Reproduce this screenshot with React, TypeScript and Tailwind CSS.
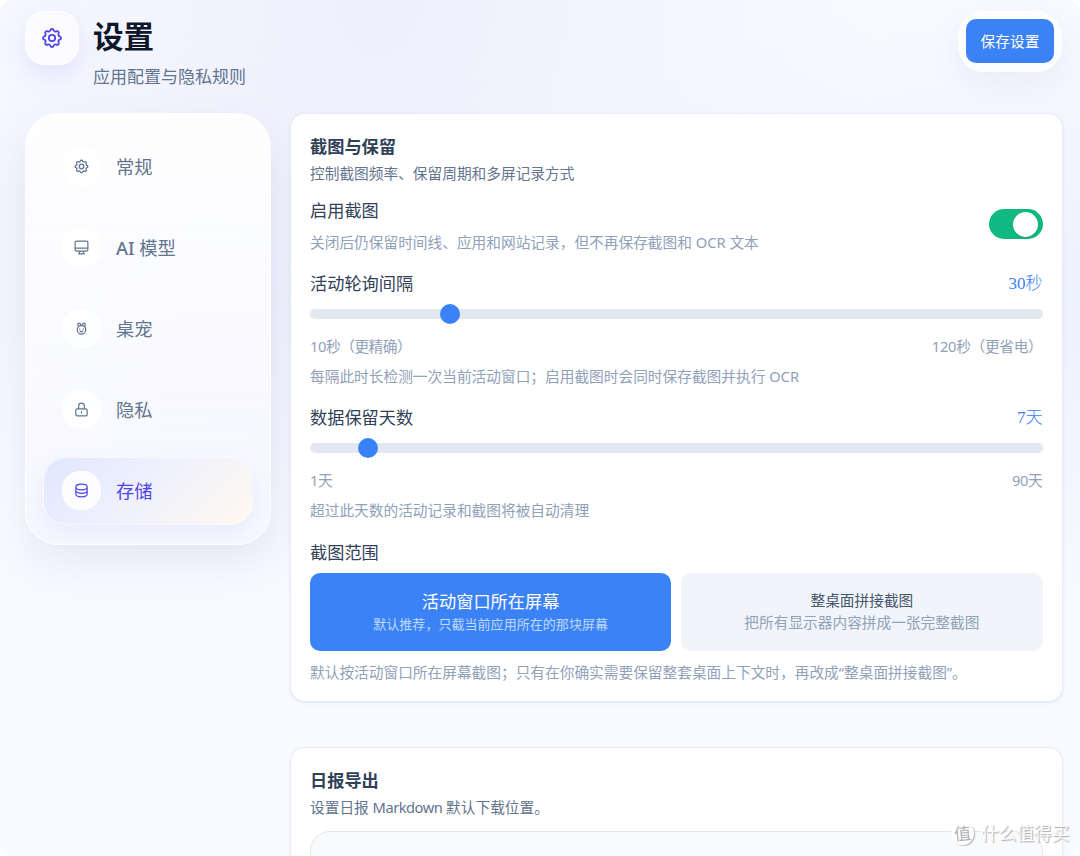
import React from "react";
import clsx from "clsx";

type IconProps = {
    className?: string
}

type Tab = {
    id: string
    label: React.ReactNode
    icon: React.ComponentType<IconProps>
}

type SliderFieldProps = {
    label: string
    value: string
    percent: number
    min: string
    max: string
    hint: string
}

function GearIcon({className} : IconProps) {
    return (
        <svg className={className} viewBox="0 0 24 24" fill="none" stroke="currentColor" strokeWidth="1.8" strokeLinejoin="round">
            <path d="M10.33 4.32c.42-1.76 2.92-1.76 3.34 0a1.72 1.72 0 002.58 1.07c1.54-.94 3.3.82 2.36 2.36a1.72 1.72 0 001.07 2.58c1.76.42 1.76 2.92 0 3.34a1.72 1.72 0 00-1.07 2.58c.94 1.54-.82 3.3-2.36 2.36a1.72 1.72 0 00-2.58 1.07c-.42 1.76-2.92 1.76-3.34 0a1.72 1.72 0 00-2.58-1.07c-1.54.94-3.3-.82-2.36-2.36a1.72 1.72 0 00-1.07-2.58c-1.76-.42-1.76-2.92 0-3.34a1.72 1.72 0 001.07-2.58c-.94-1.54.82-3.3 2.36-2.36.99.6 2.3.07 2.58-1.07z" />
            <circle cx="12" cy="12" r="3.2" />
        </svg>
    )
}

function MonitorIcon({className} : IconProps) {
    return (
        <svg className={className} viewBox="0 0 24 24" fill="none" stroke="currentColor" strokeWidth="1.7" strokeLinecap="round" strokeLinejoin="round">
            <path d="M9.75 17L9 20l-1 1h8l-1-1-.75-3M3 13h18M5 17h14a2 2 0 002-2V5a2 2 0 00-2-2H5a2 2 0 00-2 2v10a2 2 0 002 2z" />
        </svg>
    )
}

function PetIcon({className} : IconProps) {
    return (
        <svg className={className} viewBox="0 0 24 24" fill="none" stroke="currentColor" strokeWidth="1.7" strokeLinecap="round" strokeLinejoin="round">
            <path d="M8.200 9C6.200 7.500 6.300 4.500 8.300 4.500c1.700 0 2.700 1.300 2.900 3M15.800 9c2-1.500 1.900-4.500-.1-4.500-1.700 0-2.700 1.300-2.900 3" />
            <path d="M12 8c-3.500 0-6 2.400-6 5.700S8.500 20 12 20s6-3 6-6.300S15.500 8 12 8z" />
            <path d="M9.500 12.500v.3M14.500 12.500v.3M9.800 15.600c1.300 1.300 3.100 1.300 4.400 0" />
        </svg>
    )
}

function LockIcon({className} : IconProps) {
    return (
        <svg className={className} viewBox="0 0 24 24" fill="none" stroke="currentColor" strokeWidth="1.7" strokeLinecap="round" strokeLinejoin="round">
            <path d="M12 15v2m-6 4h12a2 2 0 002-2v-6a2 2 0 00-2-2H6a2 2 0 00-2 2v6a2 2 0 002 2zm10-10V7a4 4 0 00-8 0v4h8z" />
        </svg>
    )
}

function DatabaseIcon({className} : IconProps) {
    return (
        <svg className={className} viewBox="0 0 24 24" fill="none" stroke="currentColor" strokeWidth="1.7" strokeLinecap="round" strokeLinejoin="round">
            <path d="M4 7v10c0 2.210 3.582 4 8 4s8-1.790 8-4V7M4 7c0 2.210 3.582 4 8 4s8-1.790 8-4M4 7c0-2.210 3.582-4 8-4s8 1.790 8 4m0 5c0 2.210-3.582 4-8 4s-8-1.790-8-4" />
        </svg>
    )
}

const tabs: Tab[] = [
    { id: "general", label: "常规", icon: GearIcon },
    { id: "model", label: <><span className="font-medium">AI</span> 模型</>, icon: MonitorIcon },
    { id: "pet", label: "桌宠", icon: PetIcon },
    { id: "privacy", label: "隐私", icon: LockIcon },
    { id: "storage", label: "存储", icon: DatabaseIcon },
]

function Sidebar({active} : { active: string }) {
    return (
        <nav className="flex h-[432px] w-[246px] shrink-0 flex-col gap-[13px] rounded-[34px] border border-white/80 bg-linear-to-b from-white/90 to-[#f6f7ff]/80 px-[17px] pt-[19px] shadow-[0_18px_40px_rgba(100,116,160,0.12)]">
            {tabs.map(({id, label, icon: Icon}) => (
                <button
                    key={id}
                    type="button"
                    className={clsx(
                        "flex h-[68px] shrink-0 items-center gap-[15px] rounded-[24px] border px-[18px] text-[18.300px]",
                        id === active
                            ? "border-white/60 bg-[linear-gradient(135deg,#e0e7ff_0%,#f1f2fb_55%,#fff8ee_100%)] text-[#4f46e5] shadow-[0_8px_22px_rgba(99,102,241,0.09)]"
                            : "border-transparent text-slate-500"
                    )}
                >
                    <span className="-mt-px flex size-[39px] items-center justify-center rounded-[18px] bg-white/90">
                        <Icon className="size-[17px]" />
                    </span>
                    <span>{label}</span>
                </button>
            ))}
        </nav>
    )
}

function SliderField({label, value, percent, min, max, hint} : SliderFieldProps) {
    return (
        <div className="h-[134px]">
            <div className="flex h-[26px] items-center justify-between">
                <label className="text-[17.200px] text-slate-700">{label}</label>
                <span className="font-['Liberation_Serif','Noto_Sans_CJK_SC',serif] text-[17px] font-light text-[#3b82f6]">{value}</span>
            </div>
            <div className="mt-3 h-[10px] rounded-full bg-slate-200">
                {/* thumb travels inside the track, so it never overhangs the ends */}
                <div className="relative top-[-5px] size-5 rounded-full bg-[#3b82f6]" style={{ left: `calc((100% - 20px) * ${percent / 100})` }} />
            </div>
            <div className="mt-[16px] flex h-[22px] items-center justify-between text-[14.700px] text-slate-400">
                <span className="tracking-[-0.450px]">{min}</span>
                <span className="tracking-[-0.300px]">{max}</span>
            </div>
            <p className="mt-[8px] text-[14.700px] leading-[23px] text-slate-400">{hint}</p>
        </div>
    )
}

function Watermark() {
    return (
        <div className="absolute bottom-[10px] left-[951px] flex items-center gap-[7px] text-[17.700px] leading-[26px] whitespace-nowrap text-[#fbfbfc] [text-shadow:1px_1px_1px_#a6aab0]">
            <span className="flex size-[23px] items-center justify-center rounded-full bg-white text-[17px] text-[#aeb1b6] shadow-[1px_1px_1px_#b6b9be] [text-shadow:none] -rotate-6">值</span>
            <span>什么值得买</span>
        </div>
    )
}

export default function App() {
    return (
        <div className="bg-white">
            <div className="relative h-[856px] w-[1080px] overflow-hidden rounded-[14px] bg-[#f8faff] bg-[radial-gradient(ellipse_at_35%_0%,#eeeffd_0%,transparent_50%),radial-gradient(ellipse_at_100%_35%,#eef1fe_0%,transparent_40%),radial-gradient(ellipse_at_25%_35%,#eff1fd_0%,transparent_35%)] font-['Noto_Sans','Noto_Sans_CJK_SC',sans-serif]">
                <header className="flex h-[113px] justify-between pr-[18px] pl-[25px]">
                    <div className="flex">
                        <div className="mt-[11px] flex size-[54px] items-center justify-center rounded-[20px] border border-white/80 bg-white/60 text-[#4f46e5] shadow-[0_10px_24px_rgba(99,102,241,0.12)]">
                            <GearIcon className="size-6" />
                        </div>
                        <div className="ml-[14px] pt-[15px]">
                            <h1 className="text-[30.500px] leading-[42px] font-bold text-slate-900">设置</h1>
                            <p className="mt-[7px] text-[17px] leading-[26px] text-slate-500">应用配置与隐私规则</p>
                        </div>
                    </div>
                    <div className="mt-[11px] flex h-[61px] w-[104px] items-center justify-center rounded-[26px] border border-white/80 bg-white/70 pb-px shadow-[0_12px_28px_rgba(100,116,160,0.08)]">
                        <button type="button" className="h-[44px] w-[88px] rounded-[10px] bg-[#3b82f6] text-[14.700px] text-white">保存设置</button>
                    </div>
                </header>

                <main className="flex pl-[25px]">
                    <Sidebar active="storage" />

                    <div className="ml-[19px] w-[772.500px] shrink-0">
                        <section className="h-[588.500px] rounded-[15px] border border-slate-200/80 bg-white px-[19px] pt-[20px] shadow-[0_1px_3px_rgba(100,116,139,0.15)]">
                            <h2 className="text-[17.200px] leading-[26px] font-bold text-slate-700">截图与保留</h2>
                            <p className="mt-px text-[14.700px] leading-[24px] text-slate-500">控制截图频率、保留周期和多屏记录方式</p>

                            <div className="mt-[11px] flex h-[60px] items-start justify-between">
                                <div>
                                    <p className="mt-[2px] text-[17.200px] leading-[26px] text-slate-700">启用截图</p>
                                    <p className="mt-[7px] text-[14.700px] leading-[22px] text-slate-400">关闭后仍保留时间线、应用和网站记录，但不再保存截图和 OCR 文本</p>
                                </div>
                                <button type="button" aria-label="启用截图" className="mt-[13px] flex h-[30px] w-[54px] items-center justify-end rounded-full bg-[#10b981] pr-[5px]">
                                    <span className="size-[25px] rounded-full bg-white shadow-sm" />
                                </button>
                            </div>

                            <div className="mt-[15px]">
                                <SliderField label="活动轮询间隔" value="30秒" percent={18.2} min="10秒（更精确）" max="120秒（更省电）" hint="每隔此时长检测一次当前活动窗口；启用截图时会同时保存截图并执行 OCR" />
                                <SliderField label="数据保留天数" value="7天" percent={6.74} min="1天" max="90天" hint="超过此天数的活动记录和截图将被自动清理" />
                            </div>

                            <p className="mt-px text-[17.200px] leading-[26px] text-slate-700">截图范围</p>
                            <div className="mt-[7px] grid grid-cols-2 gap-[10px]">
                                <button type="button" className="h-[78px] rounded-[10px] bg-[#3b82f6] text-white">
                                    <span className="block text-[17.200px] leading-[24px]">活动窗口所在屏幕</span>
                                    <span className="block text-[13.050px] leading-[21px] text-blue-200">默认推荐，只截当前应用所在的那块屏幕</span>
                                </button>
                                <button type="button" className="h-[78px] rounded-[10px] bg-slate-100 pb-[2px] text-slate-600">
                                    <span className="block text-[14.700px] leading-[22px]">整桌面拼接截图</span>
                                    <span className="block text-[14.700px] leading-[22px] text-slate-400">把所有显示器内容拼成一张完整截图</span>
                                </button>
                            </div>
                            <p className="mt-[9px] text-[14.700px] leading-[24px] text-slate-400">默认按活动窗口所在屏幕截图；只有在你确实需要保留整套桌面上下文时，再改成“整桌面拼接截图”。</p>
                        </section>

                        <section className="mt-[45px] h-[200px] rounded-[15px] border border-slate-200/80 bg-white px-[19px] pt-[20px] shadow-[0_1px_3px_rgba(100,116,139,0.1)]">
                            <h2 className="text-[17.200px] leading-[26px] font-bold text-slate-700">日报导出</h2>
                            <p className="mt-px text-[14.700px] leading-[24px] text-slate-500">设置日报 <span className="tracking-[-0.500px]">Markdown</span> 默认下载位置。</p>
                            <div className="mt-[12px] h-[90px] rounded-[20px] border border-slate-200 bg-slate-50" />
                        </section>
                    </div>
                </main>

                <Watermark />
            </div>
        </div>
    )
}
